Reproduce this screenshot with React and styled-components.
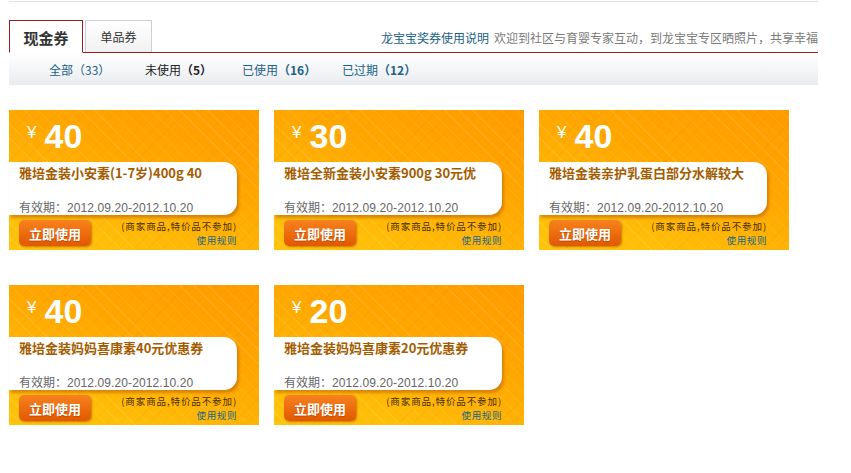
import React from "react";
import styled, { createGlobalStyle } from "styled-components";

const Global = createGlobalStyle`
  html, body { margin: 0; padding: 0; background: #fff; }
  body { font-family: "Noto Sans CJK SC", "Liberation Sans", sans-serif; }
`;

const Page = styled.div`
  width: 809px;
  padding-left: 9px;
`;

const TopRule = styled.div`
  height: 1px;
  margin-top: 1px;
  background: #e3e3e3;
`;

const TabBar = styled.div`
  display: flex;
  align-items: flex-end;
  margin-top: 18px;
  height: 32px;
  border-bottom: 1px solid #9e1c1c;
`;

const Tab = styled.div`
  box-sizing: border-box;
  display: flex;
  align-items: center;
  justify-content: center;
  flex-shrink: 0;
  margin-right: 2px;
  color: #333;
  ${(p) =>
    p.$active
      ? `
    width: 74px;
    height: 33px;
    margin-bottom: -1px;
    border: 1px solid #9e1c1c;
    border-bottom-color: #fff;
    background: #fff;
    font-size: 15px;
    font-weight: bold;
    padding-top: 2px;
  `
      : `
    width: 67px;
    height: 32px;
    border: 1px solid #cfcfcf;
    border-bottom: none;
    background: linear-gradient(#ffffff, #f1f1f1);
    font-size: 12px;
  `}
`;

const Notice = styled.div`
  margin-left: auto;
  align-self: center;
  padding-top: 3px;
  font-size: 12px;
  color: #7a7a7a;
  white-space: nowrap;
`;

const NoticeLink = styled.span`
  color: #1b6287;
  margin-right: 5px;
`;

const FilterBar = styled.div`
  display: grid;
  grid-template-columns: 96px 97px 100px auto;
  align-items: center;
  height: 32px;
  padding-left: 40px;
  background: linear-gradient(#ffffff, #e9ecef);
  font-size: 12px;
`;

const Filter = styled.span`
  color: ${(p) => (p.$current ? "#222" : "#1b6287")};
`;

const Count = styled.span`
  font-weight: ${(p) => (p.$light ? "normal" : "bold")};
`;

const Grid = styled.div`
  display: grid;
  grid-template-columns: repeat(3, 250px);
  column-gap: 15px;
  row-gap: 35px;
  margin-top: 25px;
`;

const Coupon = styled.div`
  width: 250px;
  height: 140px;
  display: flex;
  flex-direction: column;
  background:
    repeating-linear-gradient(45deg, rgba(255, 255, 255, 0) 0 9px, rgba(255, 255, 255, 0.09) 9px 10px),
    repeating-linear-gradient(-45deg, rgba(255, 255, 255, 0) 0 9px, rgba(200, 110, 0, 0.07) 9px 10px),
    linear-gradient(200deg, #ff9b00 0%, #ffa700 40%, #ffbe08 80%, #ffc40c 100%);
`;

const Amount = styled.div`
  height: 52px;
  display: flex;
  align-items: flex-start;
  padding-left: 18px;
  color: #fff;
  font-family: "Liberation Sans", Arial, sans-serif;
`;

const Yen = styled.span`
  font-size: 17px;
  margin-top: 13px;
  margin-right: 8px;
`;

const Value = styled.span`
  font-size: 34px;
  font-weight: bold;
  line-height: 1;
  margin-top: 9px;
`;

const Panel = styled.div`
  box-sizing: border-box;
  width: 228px;
  height: 53px;
  background: #fff;
  border-radius: 0 13px 13px 0;
  box-shadow: 2px 3px 3px rgba(190, 95, 0, 0.55);
  padding: 2px 0 0 10px;
  display: flex;
  flex-direction: column;
  justify-content: space-between;
`;

const Title = styled.div`
  font-size: 13px;
  font-weight: bold;
  color: #a45c00;
  line-height: 18px;
  white-space: nowrap;
`;

const Validity = styled.div`
  font-size: 12px;
  color: #666;
  line-height: 16px;
  margin-bottom: -1px;
`;

const Dates = styled.span`
  font-family: "Liberation Sans", Arial, sans-serif;
  font-size: 12px;
  letter-spacing: 0.1px;
`;

const Footer = styled.div`
  display: flex;
  justify-content: space-between;
  align-items: flex-start;
  width: 228px;
  padding: 5px 0 0 10px;
  box-sizing: border-box;
`;

const UseButton = styled.button`
  width: 72px;
  height: 26px;
  border: none;
  border-radius: 5px;
  background: linear-gradient(#f7821f, #e25800);
  box-shadow: 1px 1px 2px rgba(150, 60, 0, 0.5);
  color: #fff;
  font-family: "Noto Sans CJK SC", sans-serif;
  font-size: 13px;
  font-weight: bold;
  padding: 0;
  text-shadow: 0 1px 1px rgba(120, 40, 0, 0.4);
`;

const Rules = styled.div`
  display: flex;
  flex-direction: column;
  align-items: flex-end;
  gap: 1px;
`;

const Note = styled.div`
  font-size: 9.5px;
  line-height: 13px;
  letter-spacing: 0.9px;
  color: #4a2e00;
  white-space: nowrap;
`;

const RuleLink = styled.div`
  font-size: 9.5px;
  line-height: 13px;
  letter-spacing: 0.6px;
  color: #16698a;
  white-space: nowrap;
`;

const coupons = [
  { value: 40, title: "雅培金装小安素(1-7岁)400g 40" },
  { value: 30, title: "雅培全新金装小安素900g 30元优" },
  { value: 40, title: "雅培金装亲护乳蛋白部分水解较大" },
  { value: 40, title: "雅培金装妈妈喜康素40元优惠券" },
  { value: 20, title: "雅培金装妈妈喜康素20元优惠券" },
];

export default function App() {
  return (
    <Page>
      <Global />
      <TopRule />
      <TabBar>
        <Tab $active>现金券</Tab>
        <Tab>单品券</Tab>
        <Notice>
          <NoticeLink>龙宝宝奖券使用说明</NoticeLink>
          欢迎到社区与育婴专家互动，到龙宝宝专区晒照片，共享幸福
        </Notice>
      </TabBar>
      <FilterBar>
        <Filter>
          全部<Count $light>（33）</Count>
        </Filter>
        <Filter $current>
          未使用<Count>（5）</Count>
        </Filter>
        <Filter>
          已使用<Count>（16）</Count>
        </Filter>
        <Filter>
          已过期<Count>（12）</Count>
        </Filter>
      </FilterBar>
      <Grid>
        {coupons.map((c, i) => (
          <Coupon key={i}>
            <Amount>
              <Yen>¥</Yen>
              <Value>{c.value}</Value>
            </Amount>
            <Panel>
              <Title>{c.title}</Title>
              <Validity>
                有效期：<Dates>2012.09.20-2012.10.20</Dates>
              </Validity>
            </Panel>
            <Footer>
              <UseButton>立即使用</UseButton>
              <Rules>
                <Note>(商家商品,特价品不参加)</Note>
                <RuleLink>使用规则</RuleLink>
              </Rules>
            </Footer>
          </Coupon>
        ))}
      </Grid>
    </Page>
  );
}
